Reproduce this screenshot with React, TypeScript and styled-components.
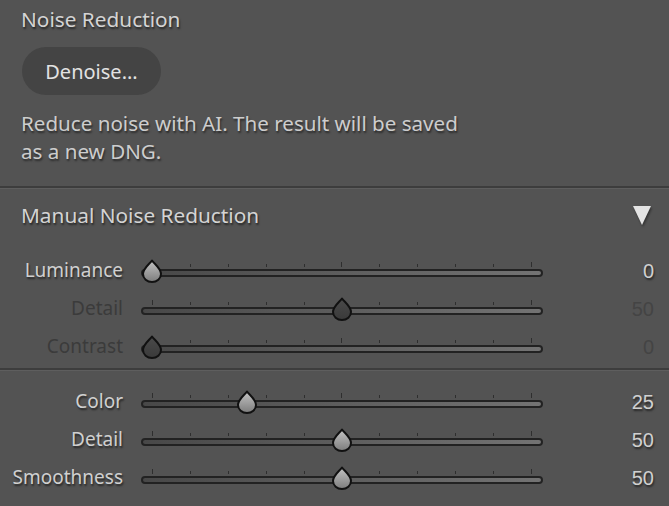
import React from "react";
import styled, { createGlobalStyle } from "styled-components";

const GlobalStyle = createGlobalStyle`
  html, body {
    margin: 0;
    padding: 0;
    background: #535353;
  }
  body {
    font-family: "Noto Sans", "Open Sans", sans-serif;
  }
`;

const Panel = styled.div`
  width: 669px;
  height: 506px;
  background: #535353;
  overflow: hidden;
  display: flex;
  flex-direction: column;
`;

const Top = styled.div`
  padding: 6px 0 0 21px;
  height: 180px;
  box-sizing: border-box;
`;

const Title = styled.div`
  font-size: 20.8px;
  line-height: 26px;
  color: #d4d4d4;
  text-shadow: 1px 2px 2px rgba(0, 0, 0, 0.55);
`;

const DenoiseButton = styled.button`
  margin: 15px 0 0 1px;
  width: 139px;
  height: 48px;
  border: none;
  border-radius: 24px;
  background: #444444;
  color: #e2e2e2;
  font-family: inherit;
  font-size: 20px;
  padding: 0;
  cursor: pointer;
`;

const Desc = styled.p`
  margin: 14px 0 0;
  font-size: 20.6px;
  line-height: 28px;
  color: #cdcdcd;
  text-shadow: 1px 2px 2px rgba(0, 0, 0, 0.5);
  width: 480px;
`;

const Divider = styled.div`
  height: 3px;
  background: linear-gradient(#3d3d3d 0, #3d3d3d 2px, #5e5e5e 2px);
  flex-shrink: 0;
`;

const SectionHead = styled.div`
  height: 64px;
  box-sizing: border-box;
  padding: 0 18px 12px 21px;
  display: flex;
  align-items: center;
  justify-content: space-between;
`;

const Triangle = styled.div`
  width: 0;
  height: 0;
  border-left: 9.5px solid transparent;
  border-right: 9.5px solid transparent;
  border-top: 19px solid #e4e4e4;
  filter: drop-shadow(1px 2px 1px rgba(0, 0, 0, 0.4));
`;

const Rows = styled.div<{ $top: number }>`
  padding-top: ${(p) => p.$top}px;
  display: flex;
  flex-direction: column;
`;

const Row = styled.div`
  height: 38px;
  display: grid;
  grid-template-columns: 123px 402px 1fr;
  column-gap: 18px;
  align-items: center;
  padding-right: 15px;
`;

const Label = styled.div<{ $dim?: boolean }>`
  text-align: right;
  font-size: 19px;
  line-height: 24px;
  margin-top: -4px;
  color: ${(p) => (p.$dim ? "#3b3b3b" : "#d0d0d0")};
  text-shadow: ${(p) => (p.$dim ? "none" : "1px 2px 2px rgba(0, 0, 0, 0.55)")};
`;

const Value = styled.div<{ $dim?: boolean }>`
  text-align: right;
  font-family: "Liberation Sans", Arial, sans-serif;
  font-size: 20px;
  line-height: 24px;
  margin-top: -2px;
  color: ${(p) => (p.$dim ? "#444444" : "#d0d0d0")};
  text-shadow: ${(p) => (p.$dim ? "none" : "1px 2px 2px rgba(0, 0, 0, 0.55)")};
`;

const SliderBox = styled.div`
  position: relative;
  height: 24px;
`;

const Ticks = styled.div`
  position: absolute;
  left: 11px;
  right: 11px;
  top: 2px;
  height: 5px;
  display: flex;
  justify-content: space-between;
`;

const Tick = styled.span<{ $tall?: boolean }>`
  width: 1px;
  height: ${(p) => (p.$tall ? 5 : 3)}px;
  margin-top: ${(p) => (p.$tall ? 0 : 2)}px;
  background: #2e2e2e;
`;

const Track = styled.div`
  position: absolute;
  left: 0;
  right: 0;
  top: 8.5px;
  height: 8px;
  box-sizing: border-box;
  border: 2px solid #222222;
  border-radius: 4px;
  background: linear-gradient(90deg, #484848, #737373);
`;

const Thumb = styled.svg`
  position: absolute;
  top: -1px;
  width: 22px;
  height: 24px;
  margin-left: -11px;
`;

type SliderProps = { label: string; value: number; dim?: boolean };

const Slider = ({ label, value, dim }: SliderProps) => {
  const left = 11 + (value / 100) * 380;
  const gid = `g-${label}-${value}-${dim ? 1 : 0}`;
  return (
    <Row>
      <Label $dim={dim}>{label}</Label>
      <SliderBox>
        <Ticks>
          {Array.from({ length: 11 }).map((_, i) => (
            <Tick key={i} $tall={i === 0 || i === 5 || i === 10} />
          ))}
        </Ticks>
        <Track />
        <Thumb style={{ left }} viewBox="0 0 22 24">
          <defs>
            <linearGradient id={gid} x1="0" y1="0" x2="0" y2="1">
              <stop offset="0" stopColor={dim ? "#4a4a4a" : "#c4c4c4"} />
              <stop offset="1" stopColor={dim ? "#3a3a3a" : "#7c7c7c"} />
            </linearGradient>
          </defs>
          <path
            d="M11 1.5 C13.5 5 20 9.5 20 15 A9 8 0 0 1 2 15 C2 9.5 8.5 5 11 1.5 Z"
            fill={`url(#${gid})`}
            stroke="#111"
            strokeWidth="2"
            strokeLinejoin="round"
          />
        </Thumb>
      </SliderBox>
      <Value $dim={dim}>{value}</Value>
    </Row>
  );
};

export default function App() {
  return (
    <Panel>
      <GlobalStyle />
      <Top>
        <Title>Noise Reduction</Title>
        <DenoiseButton>Denoise...</DenoiseButton>
        <Desc>
          Reduce noise with AI. The result will be saved
          <br />
          as a new DNG.
        </Desc>
      </Top>
      <Divider style={{ marginTop: 6 }} />
      <SectionHead>
        <Title>Manual Noise Reduction</Title>
        <Triangle />
      </SectionHead>
      <Rows $top={0}>
        <Slider label="Luminance" value={0} />
        <Slider label="Detail" value={50} dim />
        <Slider label="Contrast" value={0} dim />
      </Rows>
      <Divider style={{ marginTop: 1 }} />
      <Rows $top={13}>
        <Slider label="Color" value={25} />
        <Slider label="Detail" value={50} />
        <Slider label="Smoothness" value={50} />
      </Rows>
    </Panel>
  );
}
